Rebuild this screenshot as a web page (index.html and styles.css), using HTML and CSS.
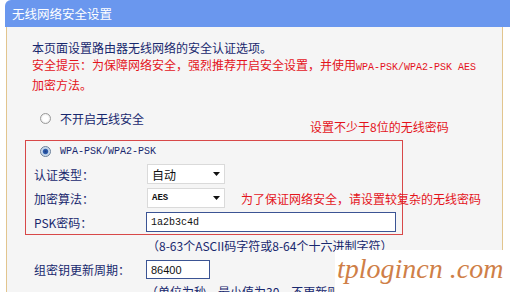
FILE: index.html
```html
<!DOCTYPE html>
<html lang="zh-CN">
<head>
<meta charset="utf-8">
<title>无线网络安全设置</title>
<link rel="stylesheet" href="styles.css">
</head>
<body>
<div class="page">
  <div class="header">无线网络安全设置</div>
  <div class="panel">
    <p class="line navy">本页面设置路由器无线网络的安全认证选项。</p>
    <p class="line red">安全提示：为保障网络安全，强烈推荐开启安全设置，并使用<span class="mono">WPA-PSK/WPA2-PSK AES</span></p>
    <p class="line red">加密方法。</p>

    <div class="radio-row outer navy"><span class="radio"></span>不开启无线安全</div>

    <div class="box">
      <span class="note">设置不少于8位的无线密码</span>
      <div class="radio-row inner navy"><span class="radio checked"></span><span class="mono">WPA-PSK/WPA2-PSK</span></div>
      <div class="field">
        <span class="label navy">认证类型：</span>
        <div class="select"><span>自动</span><svg class="arrow" width="7" height="4" viewBox="0 0 7 4"><path d="M0 0H7L3.5 4Z" fill="#111"/></svg></div>
      </div>
      <div class="field">
        <span class="label navy">加密算法：</span>
        <div class="select"><span class="mono">AES</span><svg class="arrow" width="7" height="4" viewBox="0 0 7 4"><path d="M0 0H7L3.5 4Z" fill="#111"/></svg></div>
        <span class="tip red">为了保证网络安全，请设置较复杂的无线密码</span>
      </div>
      <div class="field">
        <span class="label navy">PSK密码：</span>
        <div class="input psk"><span class="mono">1a2b3c4d</span></div>
      </div>
    </div>

    <p class="hint navy">（8-63个ASCII码字符或8-64个十六进制字符）</p>

    <div class="field outer-field">
      <span class="label navy">组密钥更新周期：</span>
      <div class="input period">86400</div>
    </div>

    <p class="hint last navy">（单位为秒，最小值为30，不更新则为0）</p>
  </div>
  <div class="watermark">tplogincn .com</div>
</div>
</body>
</html>
```
FILE: styles.css
```css
html, body {
  margin: 0;
  padding: 0;
  background: #ffffff;
}
body {
  font-family: "Noto Sans CJK SC", "Noto Sans", sans-serif;
  font-size: 12px;
  overflow: hidden;
}
.page {
  position: relative;
  width: 510px;
  height: 292px;
  overflow: hidden;
}
.header {
  margin-left: 5px;
  height: 27px;
  line-height: 27px;
  padding-left: 7px;
  background: #6a97ee;
  color: #ffffff;
  font-size: 12.5px;
  border-top-left-radius: 6px;
}
.panel {
  margin-left: 6px;
  width: 497px;
  height: 265px;
  box-sizing: border-box;
  border-left: 1px solid #e2c58e;
  border-right: 1px solid #e2c58e;
  background: #f5f5f5;
  padding: 12px 0 0 18px;
}
p { margin: 0; }
.navy { color: #18286e; }
.red { color: #e4141c; }
.mono {
  font-family: "Liberation Mono", monospace;
  font-size: 10px;
}
.line {
  margin-left: 7px;
  line-height: 17px;
  white-space: nowrap;
}
.radio-row {
  display: flex;
  align-items: center;
  height: 17px;
  line-height: 17px;
}
.radio-row.outer {
  margin-top: 17px;
  padding-left: 15px;
}
.radio-row.inner {
  padding-left: 6px;
}
.radio {
  width: 9px;
  height: 9px;
  border-radius: 50%;
  border: 1px solid #9a9a9a;
  background: radial-gradient(circle at 50% 50%, #ffffff 0, #ffffff 40%, #dcdcdc 100%);
  margin-right: 9px;
  box-sizing: content-box;
}
.radio.checked {
  border-color: #6a7f9a;
  background: radial-gradient(circle at 50% 50%, #1f3f86 0, #2f5fae 35%, #bfd3ea 50%, #e8eef6 100%);
}
.box {
  position: relative;
  margin-top: 13px;
  width: 378px;
  box-sizing: border-box;
  border: 1px solid #d84848;
  padding: 2px 0 2px 8px;
}
.note {
  position: absolute;
  left: 284px;
  top: -23px;
  color: #e4141c;
  white-space: nowrap;
}
.field {
  display: flex;
  align-items: center;
  margin-top: 4px;
  height: 20px;
  white-space: nowrap;
}
.label {
  width: 112px;
  flex: none;
}
.select {
  flex: none;
  width: 78px;
  height: 20px;
  box-sizing: border-box;
  margin-left: 1px;
  background: #ffffff;
  border: 1px solid #dadada;
  display: flex;
  align-items: center;
  justify-content: space-between;
  padding: 0 4px 0 4px;
  color: #111111;
}
.select .mono { color: #111111; font-weight: bold; font-size: 9px; }
.arrow { flex: none; }
.tip {
  margin-left: 16px;
}
.input {
  flex: none;
  height: 20px;
  box-sizing: border-box;
  background: #ffffff;
  border: 1px solid #3b5494;
  padding-left: 4px;
  display: flex;
  align-items: center;
  color: #111111;
}
.input.psk { width: 250px; }
.hint {
  margin-top: 2px;
  margin-left: 122px;
  line-height: 17px;
  white-space: nowrap;
}
.outer-field {
  margin-top: 6px;
  margin-left: 9px;
  height: 19px;
}
.input.period {
  width: 64px;
  height: 19px;
  font-family: "Liberation Sans", sans-serif;
  font-size: 11px;
  color: #111111;
}
.hint.last {
  margin-top: 4px;
  margin-left: 121px;
}
.watermark {
  position: absolute;
  left: 335px;
  top: 250px;
  width: 175px;
  height: 42px;
  background: #ffffff;
  box-sizing: border-box;
  padding: 3px 0 0 2px;
  font-family: "Liberation Serif", serif;
  font-style: italic;
  font-size: 28px;
  color: #cf7f48;
  white-space: nowrap;
}
```
